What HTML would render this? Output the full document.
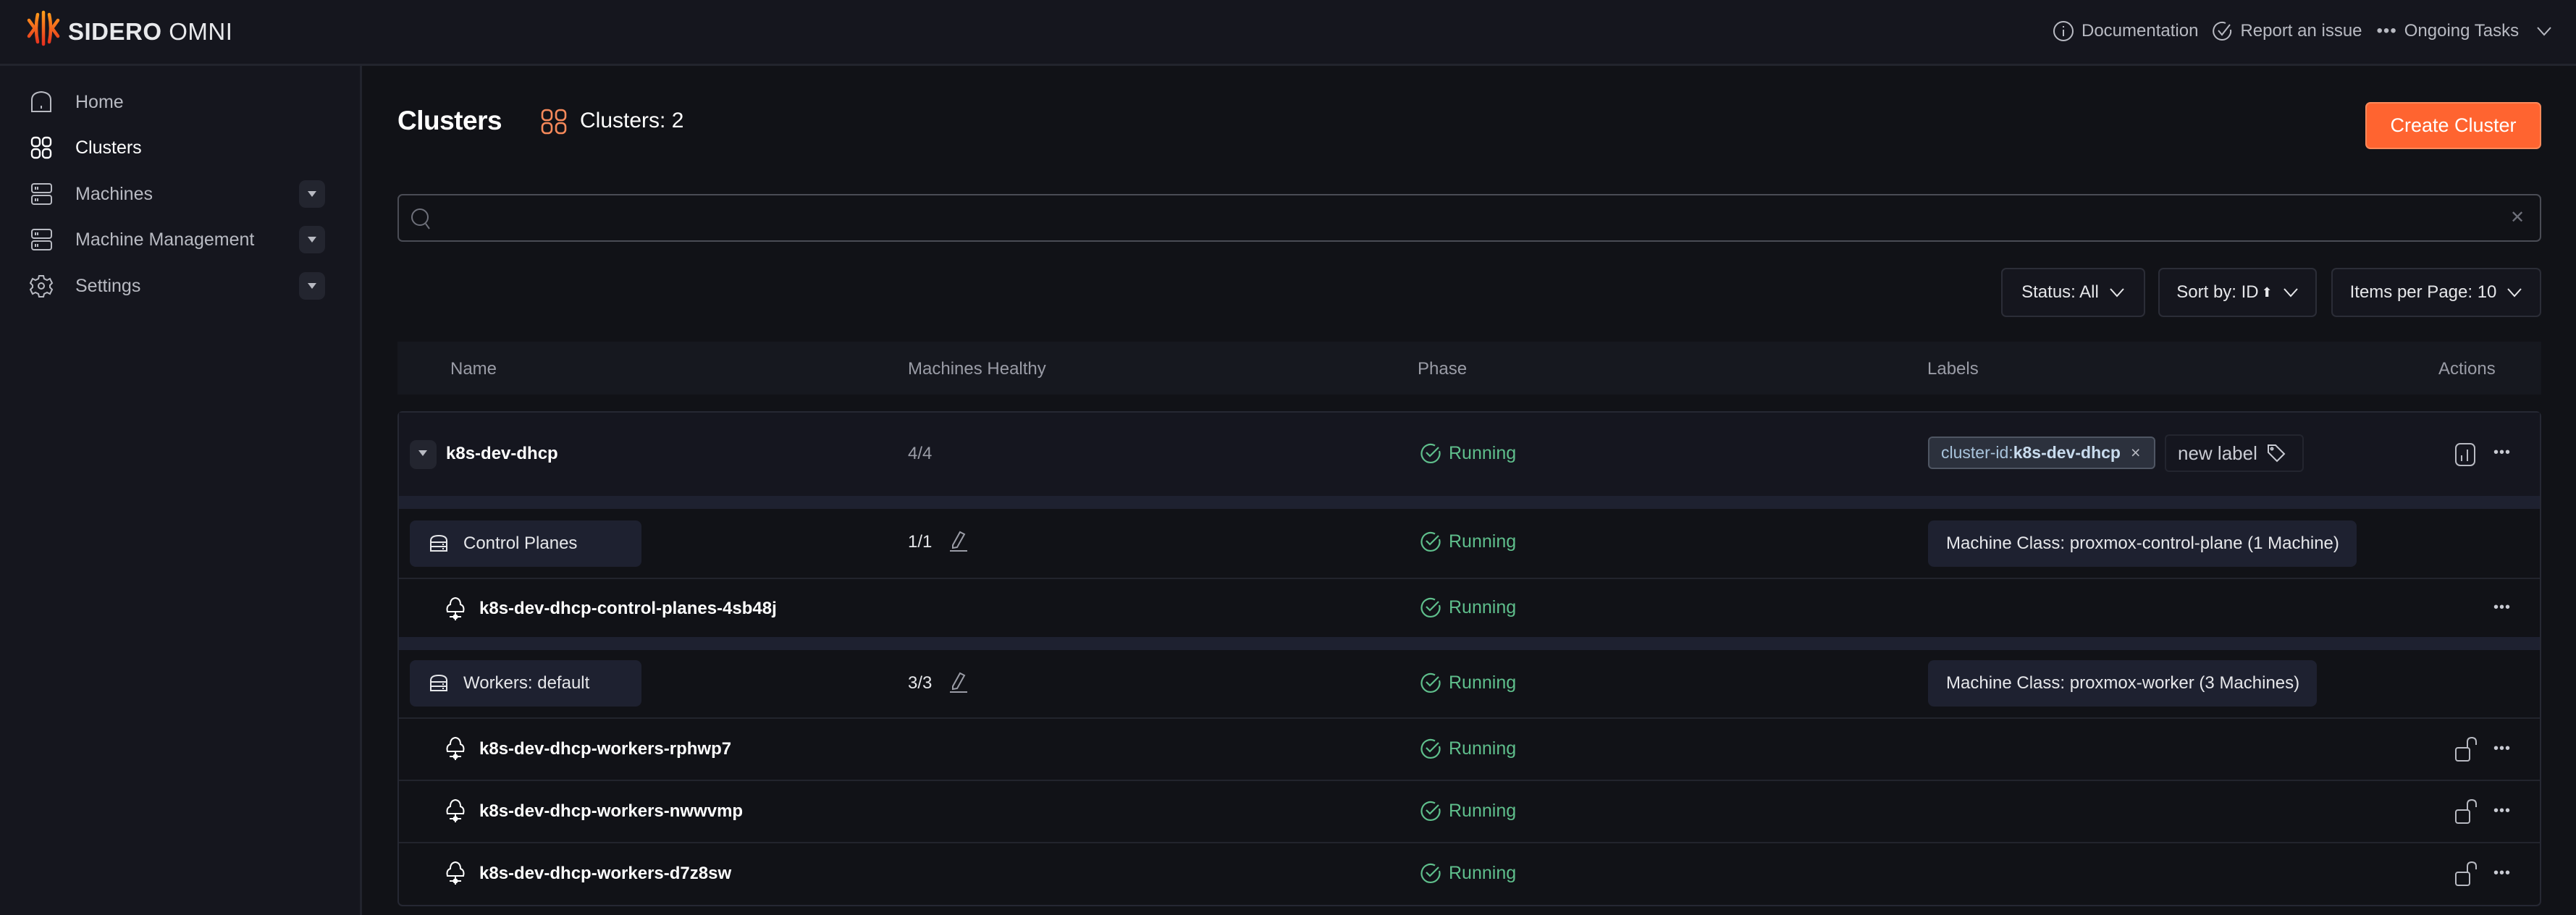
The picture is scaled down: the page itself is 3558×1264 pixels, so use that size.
<!DOCTYPE html>
<html><head><meta charset="utf-8"><style>
*{box-sizing:border-box;margin:0;padding:0}
body{width:3558px;height:1264px;background:#111217;font-family:"Liberation Sans",sans-serif;color:#c9cbd3;position:relative;overflow:hidden}
.a{position:absolute}
.hdr{left:0;top:0;width:3558px;height:91px;background:#15161e;border-bottom:3px solid #22242d}
.side{left:0;top:91px;width:500px;height:1173px;background:#15161e;border-right:3px solid #22242d}
.ni{left:40px;height:40px;display:flex;align-items:center;font-size:25px;color:#b8bac2}
.ni svg{width:34px;height:34px;margin-right:30px}
.dd{left:413px;width:36px;height:38px;background:#23252f;border-radius:9px}
.dd:after{content:"";position:absolute;left:12px;top:15px;border:6px solid transparent;border-top:8px solid #b8bac2}
.t{font-size:24px;color:#9a9ca6}
.band{left:551px;width:2957px;background:#1e2130}
.run{left:1961px;display:flex;align-items:center;color:#5fbf8c;font-size:25px}
.run svg{width:30px;height:30px;margin-right:10px}
.pill{background:#1e2130;border-radius:8px;display:flex;align-items:center;font-size:24px;color:#e6e7ea}
.dots{font-size:20px;color:#c9cbd3;letter-spacing:1px}
.bold{font-weight:bold;color:#fff;font-size:24px}
.filt{top:370px;height:68px;border:2px solid #2b2d37;border-radius:7px;background:#15161e;display:flex;align-items:center;justify-content:center;font-size:24px;color:#e6e7ea}
.chev{width:22px;height:14px;margin-left:14px}
</style></head><body>
<div class="a hdr"></div>
<svg class="a" style="left:36px;top:14px" width="48" height="50" viewBox="0 0 48 50">
<defs><linearGradient id="g" gradientUnits="userSpaceOnUse" x1="0" y1="0" x2="0" y2="50"><stop offset="0" stop-color="#ffa41b"/><stop offset="1" stop-color="#e5291f"/></linearGradient></defs>
<g fill="none" stroke="url(#g)" stroke-width="4.5" stroke-linecap="round"><path d="M24 3V47"/><path d="M16 6Q12 25 16 44"/><path d="M32 6Q36 25 32 44"/><path d="M4 14L12 25L4 36"/><path d="M44 14L36 25L44 36"/></g></svg>
<div class="a" style="left:94px;top:25px;font-size:33px;color:#e8e9ec;letter-spacing:0.5px"><b>SIDERO</b> OMNI</div>
<div class="a t" style="left:2835px;top:28px;display:flex;align-items:center;gap:10px;color:#b8bac2">
<svg width="30" height="30" viewBox="0 0 30 30" fill="none" stroke="#b8bac2" stroke-width="2"><circle cx="15" cy="15" r="13"/><path d="M15 13V22M15 8V10"/></svg>Documentation
<svg style="margin-left:8px" width="30" height="30" viewBox="0 0 30 30" fill="none" stroke="#b8bac2" stroke-width="2"><path d="M27 13A12 12 0 1 1 20 4"/><path d="M10 14L15 20L26 6"/></svg>Report an issue
<span style="margin-left:10px;letter-spacing:1px">•••</span>Ongoing Tasks
<svg class="chev" viewBox="0 0 22 14" fill="none" stroke="#b8bac2" stroke-width="2"><path d="M2 2L11 12L20 2"/></svg></div>

<div class="a side"></div>
<div class="a ni" style="top:121px"><svg viewBox="0 0 34 34" fill="none" stroke="#b8bac2" stroke-width="2"><path d="M4 30V14Q4 4 17 3Q30 4 30 14V30Z"/><path d="M17 22V26"/></svg>Home</div>
<div class="a ni" style="top:184px;color:#fff"><svg viewBox="0 0 34 34" fill="none" stroke="#fff" stroke-width="2.4"><rect x="4" y="3" width="11" height="12" rx="4"/><rect x="19" y="3" width="11" height="12" rx="4"/><rect x="4" y="19" width="11" height="12" rx="4"/><rect x="19" y="19" width="11" height="12" rx="4"/></svg>Clusters</div>
<div class="a ni" style="top:248px"><svg viewBox="0 0 34 34" fill="none" stroke="#b8bac2" stroke-width="2"><rect x="4" y="3" width="27" height="12" rx="3"/><rect x="4" y="19" width="27" height="12" rx="3"/><path d="M9 7V11M12 7V11M9 23V27M12 23V27"/></svg>Machines</div>
<div class="a dd" style="top:249px"></div>
<div class="a ni" style="top:311px"><svg viewBox="0 0 34 34" fill="none" stroke="#b8bac2" stroke-width="2"><rect x="4" y="3" width="27" height="12" rx="3"/><rect x="4" y="19" width="27" height="12" rx="3"/><path d="M9 7V11M12 7V11M9 23V27M12 23V27"/></svg>Machine Management</div>
<div class="a dd" style="top:312px"></div>
<div class="a ni" style="top:375px"><svg viewBox="0 0 34 34" fill="none" stroke="#b8bac2" stroke-width="2"><path d="M14 3H20L21 7L25 9L29 7L32 13L29 16V19L32 22L29 28L25 26L21 28L20 32H14L13 28L9 26L5 28L2 22L5 19V16L2 13L5 7L9 9L13 7Z"/><circle cx="17" cy="17" r="4"/></svg>Settings</div>
<div class="a dd" style="top:376px"></div>

<div class="a" style="left:549px;top:146px;font-size:37px;color:#fff;font-weight:bold;letter-spacing:-0.5px">Clusters</div>
<svg class="a" style="left:747px;top:150px" width="36" height="36" viewBox="0 0 36 36" fill="none" stroke="#f6895a" stroke-width="2.6"><rect x="2" y="2" width="13" height="14" rx="5"/><rect x="21" y="2" width="13" height="14" rx="5"/><rect x="2" y="20" width="13" height="14" rx="5"/><rect x="21" y="20" width="13" height="14" rx="5"/></svg>
<div class="a" style="left:801px;top:150px;font-size:30px;color:#fff">Clusters: 2</div>
<div class="a" style="left:3267px;top:141px;width:243px;height:65px;background:#ff6430;border:2px solid #ff8a5a;border-radius:7px;color:#fff;font-size:27px;display:flex;align-items:center;justify-content:center">Create Cluster</div>

<div class="a" style="left:549px;top:268px;width:2961px;height:66px;border:2px solid #4a4c55;border-radius:7px;background:#111217"></div>
<svg class="a" style="left:566px;top:286px" width="34" height="34" viewBox="0 0 34 34" fill="none" stroke="#6e707a" stroke-width="2"><circle cx="14" cy="14" r="11"/><path d="M22 23L27 30"/></svg>
<div class="a" style="left:3467px;top:286px;font-size:24px;color:#6e707a">✕</div>

<div class="a filt" style="left:2764px;width:199px">Status: All<svg class="chev" viewBox="0 0 22 14" fill="none" stroke="#e6e7ea" stroke-width="2"><path d="M2 2L11 12L20 2"/></svg></div>
<div class="a filt" style="left:2981px;width:219px">Sort by: ID <span style="font-size:18px;margin-left:4px">⬆</span><svg class="chev" viewBox="0 0 22 14" fill="none" stroke="#e6e7ea" stroke-width="2"><path d="M2 2L11 12L20 2"/></svg></div>
<div class="a filt" style="left:3220px;width:290px">Items per Page: 10<svg class="chev" viewBox="0 0 22 14" fill="none" stroke="#e6e7ea" stroke-width="2"><path d="M2 2L11 12L20 2"/></svg></div>

<div class="a" style="left:549px;top:472px;width:2961px;height:73px;background:#16181f"></div>
<div class="a t" style="left:622px;top:496px">Name</div>
<div class="a t" style="left:1254px;top:496px">Machines Healthy</div>
<div class="a t" style="left:1958px;top:496px">Phase</div>
<div class="a t" style="left:2662px;top:496px">Labels</div>
<div class="a t" style="left:3368px;top:496px">Actions</div>

<div class="a" style="left:549px;top:568px;width:2961px;height:684px;border:2px solid #262833;border-radius:7px;background:#111217"></div>
<div class="a" style="left:551px;top:570px;width:2957px;height:115px;background:#15161f"></div>
<div class="a band" style="top:685px;height:18px"></div>
<div class="a band" style="top:798px;height:2px;background:#22242d"></div>
<div class="a band" style="top:880px;height:18px"></div>
<div class="a band" style="top:991px;height:2px;background:#22242d"></div>
<div class="a band" style="top:1077px;height:2px;background:#22242d"></div>
<div class="a band" style="top:1163px;height:2px;background:#22242d"></div>

<div class="a" style="left:566px;top:608px;width:37px;height:40px;background:#23252f;border-radius:9px"></div>
<div class="a" style="left:578px;top:622px;border:6px solid transparent;border-top:8px solid #b8bac2"></div>
<div class="a bold" style="left:616px;top:613px">k8s-dev-dhcp</div>
<div class="a t" style="left:1254px;top:613px">4/4</div>

<div class="a pill" style="left:566px;top:719px;width:320px;height:64px;padding-left:26px"><svg width="28" height="28" viewBox="0 0 28 28" fill="none" stroke="#e6e7ea" stroke-width="2"><path d="M3 10Q3 3 14 3Q25 3 25 10V24H3Z"/><path d="M3 12H25M3 18H25M20 14V16M20 20V22"/></svg><span style="margin-left:20px">Control Planes</span></div>
<div class="a" style="left:1254px;top:735px;font-size:24px;color:#e6e7ea">1/1</div>
<svg class="a" style="left:1310px;top:731px" width="28" height="32" viewBox="0 0 28 32" fill="none" stroke="#9a9ca6" stroke-width="2"><path d="M6 22L16 4L22 7L12 25L6 26Z"/><path d="M2 30H26"/></svg>

<svg class="a" style="left:614px;top:823px" width="30" height="36" viewBox="0 0 30 36" fill="none" stroke="#fff" stroke-width="2"><path d="M4 22Q2 14 8 12Q8 4 15 3Q22 4 22 12Q28 14 26 22Z"/><path d="M15 22V34M7 29H23"/><circle cx="15" cy="29" r="2.5"/></svg>
<div class="a bold" style="left:662px;top:827px">k8s-dev-dhcp-control-planes-4sb48j</div>

<div class="a pill" style="left:566px;top:912px;width:320px;height:64px;padding-left:26px"><svg width="28" height="28" viewBox="0 0 28 28" fill="none" stroke="#e6e7ea" stroke-width="2"><path d="M3 10Q3 3 14 3Q25 3 25 10V24H3Z"/><path d="M3 12H25M3 18H25M20 14V16M20 20V22"/></svg><span style="margin-left:20px">Workers: default</span></div>
<div class="a" style="left:1254px;top:930px;font-size:24px;color:#e6e7ea">3/3</div>
<svg class="a" style="left:1310px;top:926px" width="28" height="32" viewBox="0 0 28 32" fill="none" stroke="#9a9ca6" stroke-width="2"><path d="M6 22L16 4L22 7L12 25L6 26Z"/><path d="M2 30H26"/></svg>

<svg class="a" style="left:614px;top:1016px" width="30" height="36" viewBox="0 0 30 36" fill="none" stroke="#fff" stroke-width="2"><path d="M4 22Q2 14 8 12Q8 4 15 3Q22 4 22 12Q28 14 26 22Z"/><path d="M15 22V34M7 29H23"/><circle cx="15" cy="29" r="2.5"/></svg>
<div class="a bold" style="left:662px;top:1021px">k8s-dev-dhcp-workers-rphwp7</div>
<svg class="a" style="left:614px;top:1102px" width="30" height="36" viewBox="0 0 30 36" fill="none" stroke="#fff" stroke-width="2"><path d="M4 22Q2 14 8 12Q8 4 15 3Q22 4 22 12Q28 14 26 22Z"/><path d="M15 22V34M7 29H23"/><circle cx="15" cy="29" r="2.5"/></svg>
<div class="a bold" style="left:662px;top:1107px">k8s-dev-dhcp-workers-nwwvmp</div>
<svg class="a" style="left:614px;top:1188px" width="30" height="36" viewBox="0 0 30 36" fill="none" stroke="#fff" stroke-width="2"><path d="M4 22Q2 14 8 12Q8 4 15 3Q22 4 22 12Q28 14 26 22Z"/><path d="M15 22V34M7 29H23"/><circle cx="15" cy="29" r="2.5"/></svg>
<div class="a bold" style="left:662px;top:1193px">k8s-dev-dhcp-workers-d7z8sw</div>

<div class="a run" style="top:611px"><svg viewBox="0 0 30 30" fill="none" stroke="#5fbf8c" stroke-width="2.2"><path d="M27 12A12.5 12.5 0 1 1 21 4.5"/><path d="M9 14L14 19L26 7"/></svg>Running</div>
<div class="a run" style="top:733px"><svg viewBox="0 0 30 30" fill="none" stroke="#5fbf8c" stroke-width="2.2"><path d="M27 12A12.5 12.5 0 1 1 21 4.5"/><path d="M9 14L14 19L26 7"/></svg>Running</div>
<div class="a run" style="top:824px"><svg viewBox="0 0 30 30" fill="none" stroke="#5fbf8c" stroke-width="2.2"><path d="M27 12A12.5 12.5 0 1 1 21 4.5"/><path d="M9 14L14 19L26 7"/></svg>Running</div>
<div class="a run" style="top:928px"><svg viewBox="0 0 30 30" fill="none" stroke="#5fbf8c" stroke-width="2.2"><path d="M27 12A12.5 12.5 0 1 1 21 4.5"/><path d="M9 14L14 19L26 7"/></svg>Running</div>
<div class="a run" style="top:1019px"><svg viewBox="0 0 30 30" fill="none" stroke="#5fbf8c" stroke-width="2.2"><path d="M27 12A12.5 12.5 0 1 1 21 4.5"/><path d="M9 14L14 19L26 7"/></svg>Running</div>
<div class="a run" style="top:1105px"><svg viewBox="0 0 30 30" fill="none" stroke="#5fbf8c" stroke-width="2.2"><path d="M27 12A12.5 12.5 0 1 1 21 4.5"/><path d="M9 14L14 19L26 7"/></svg>Running</div>
<div class="a run" style="top:1191px"><svg viewBox="0 0 30 30" fill="none" stroke="#5fbf8c" stroke-width="2.2"><path d="M27 12A12.5 12.5 0 1 1 21 4.5"/><path d="M9 14L14 19L26 7"/></svg>Running</div>

<div class="a" style="left:2663px;top:603px;width:314px;height:45px;background:#2c313d;border:2px solid #4f5663;border-radius:6px;display:flex;align-items:center;padding-left:16px;font-size:23px;color:#a9c4dc">cluster-id:<b style="color:#c9dcee">k8s-dev-dhcp</b><span style="margin-left:14px;color:#b8bac2">×</span></div>
<div class="a" style="left:2990px;top:600px;width:192px;height:52px;border:2px solid #23252f;border-radius:6px;display:flex;align-items:center;padding-left:16px;font-size:26px;color:#c9cbd3">new label<svg style="margin-left:12px" width="28" height="28" viewBox="0 0 28 28" fill="none" stroke="#c9cbd3" stroke-width="2"><path d="M3 3H13L25 15L15 25L3 13Z"/><circle cx="8" cy="8" r="1.5"/></svg></div>
<div class="a pill" style="left:2663px;top:719px;width:592px;height:64px;padding-left:25px">Machine Class: proxmox-control-plane (1 Machine)</div>
<div class="a pill" style="left:2663px;top:912px;width:537px;height:64px;padding-left:25px">Machine Class: proxmox-worker (3 Machines)</div>

<svg class="a" style="left:3390px;top:611px" width="30" height="34" viewBox="0 0 30 34" fill="none" stroke="#b8bac2" stroke-width="2"><rect x="2" y="2" width="26" height="30" rx="6"/><path d="M10 18V26M18 10V26"/></svg>
<div class="a dots" style="left:3444px;top:614px">•••</div>
<div class="a dots" style="left:3444px;top:828px">•••</div>
<svg class="a" style="left:3390px;top:1017px" width="32" height="36" viewBox="0 0 32 36" fill="none" stroke="#b8bac2" stroke-width="2"><rect x="2" y="16" width="19" height="18" rx="3"/><path d="M18 16V8Q18 2 24 2Q30 2 30 8V12"/></svg>
<div class="a dots" style="left:3444px;top:1023px">•••</div>
<svg class="a" style="left:3390px;top:1103px" width="32" height="36" viewBox="0 0 32 36" fill="none" stroke="#b8bac2" stroke-width="2"><rect x="2" y="16" width="19" height="18" rx="3"/><path d="M18 16V8Q18 2 24 2Q30 2 30 8V12"/></svg>
<div class="a dots" style="left:3444px;top:1109px">•••</div>
<svg class="a" style="left:3390px;top:1189px" width="32" height="36" viewBox="0 0 32 36" fill="none" stroke="#b8bac2" stroke-width="2"><rect x="2" y="16" width="19" height="18" rx="3"/><path d="M18 16V8Q18 2 24 2Q30 2 30 8V12"/></svg>
<div class="a dots" style="left:3444px;top:1195px">•••</div>
</body></html>
